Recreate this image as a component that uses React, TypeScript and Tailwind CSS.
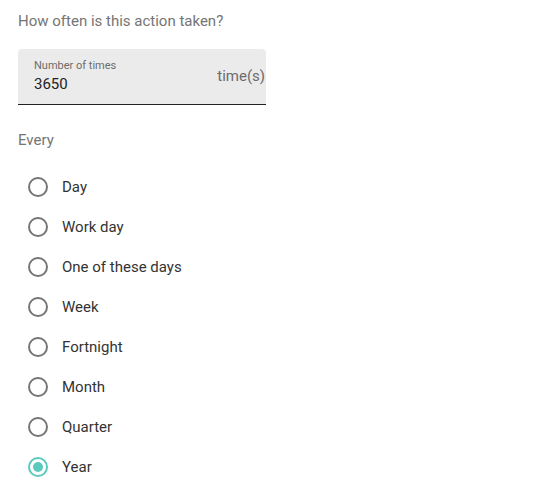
import React from "react";

const options = ["Day", "Work day", "One of these days", "Week", "Fortnight", "Month", "Quarter", "Year"];

function Radio({ checked }: { checked: boolean }) {
  return (
    <svg width="22" height="22" viewBox="0 0 22 22">
      <circle cx="11" cy="11" r="9" fill="none" stroke={checked ? "#5cc9bd" : "#757575"} strokeWidth="2" />
      {checked && <circle cx="11" cy="11" r="5" fill="#5cc9bd" />}
    </svg>
  );
}

export default function App() {
  return (
    <div className="w-[547px] h-[492px] bg-white pl-[18px] pt-[11px]" style={{ fontFamily: "Roboto, sans-serif" }}>
      <div className="text-[15px] leading-[20px] text-[#757575]">How often is this action taken?</div>
      <div className="mt-[18px] w-[248px] h-[56px] bg-[#ebebeb] rounded-t-[4px] border-b border-[#222] relative flex">
        <div className="pl-[16px] pt-[10px] flex-1">
          <div className="text-[11px] leading-[14px] text-[#6b6b6b]">Number of times</div>
          <div className="text-[15px] leading-[20px] text-[#222] mt-[1px]">3650</div>
        </div>
        <div className="pt-[17px] pr-[1px] text-[15px] leading-[20px] text-[#6b6b6b]">time(s)</div>
      </div>
      <div className="mt-[25px] text-[15px] leading-[20px] text-[#757575]">Every</div>
      <div className="mt-[17px] flex flex-col">
        {options.map((o, i) => (
          <div key={o} className="h-[40px] flex items-center">
            <div className="ml-[9px] w-[22px] h-[22px]">
              <Radio checked={i === options.length - 1} />
            </div>
            <span className="ml-[13px] text-[15px] leading-[20px] text-[#333]">{o}</span>
          </div>
        ))}
      </div>
    </div>
  );
}
